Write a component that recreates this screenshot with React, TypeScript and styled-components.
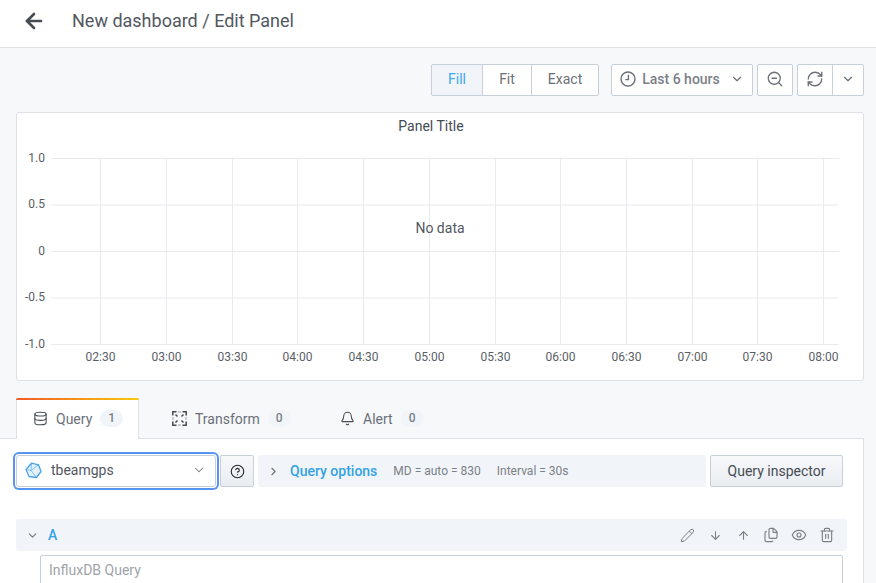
import React from "react";
import styled, { createGlobalStyle } from "styled-components";
import {
  ArrowLeft, ZoomOut, RefreshCw, ChevronDown, ChevronRight, Pencil, ArrowDown, ArrowUp,
  Files, Eye, Trash2, Database, Bell, CircleHelp,
} from "lucide-react";

const Global = createGlobalStyle`
  html, body { margin: 0; padding: 0; height: 583px; overflow: hidden; background: #f7f8fa; }
  body { font-family: Roboto, "Liberation Sans", sans-serif; color: #464c54; }
  * { box-sizing: border-box; }
`;

const Page = styled.div`
  width: 876px;
  height: 583px;
  overflow: hidden;
  display: flex;
  flex-direction: column;
`;
const Header = styled.header`
  height: 48px;
  flex: none;
  background: #fff;
  border-bottom: 1px solid #dde0e5;
  display: flex;
  align-items: center;
  padding: 0 0 6px 22px;
  gap: 26px;
  color: #464c54;
`;
const Title = styled.h1`
  margin: 0;
  font-size: 18px;
  font-weight: 400;
  line-height: 24px;
  color: #52575f;
`;
const Toolbar = styled.div`
  height: 32px;
  margin: 16px 12px 0 0;
  flex: none;
  display: flex;
  justify-content: flex-end;
`;
const Group = styled.div<{ $mr?: number }>`
  display: flex;
  margin-right: ${(p) => p.$mr ?? 0}px;
`;
const ToolBtn = styled.div<{ $w: number; $active?: boolean; $pos?: "l" | "m" | "r" | "s" }>`
  width: ${(p) => p.$w}px;
  height: 32px;
  display: flex;
  align-items: center;
  justify-content: center;
  gap: 6px;
  padding-bottom: 2px;
  font-size: 14px;
  font-weight: 450;
  color: ${(p) => (p.$active ? "#3ba9ee" : "#6b7078")};
  background: ${(p) => (p.$active ? "#f1f5f9" : "#fff")};
  border: 1px solid #c7d0d9;
  margin-left: ${(p) => (p.$pos === "m" || p.$pos === "r" ? "-1px" : "0")};
  border-radius: ${(p) =>
    p.$pos === "l" ? "2px 0 0 2px" : p.$pos === "r" ? "0 2px 2px 0" : p.$pos === "s" ? "2px" : "0"};
`;
const TimeLabel = styled.span`
  color: #7b8087;
  font-weight: 500;
  margin-right: 4px;
`;
const Panel = styled.section`
  margin: 16px 12px 0 16px;
  height: 269px;
  flex: none;
  background: #fff;
  border: 1px solid #dde0e5;
  border-radius: 3px;
  position: relative;
`;
const PanelTitle = styled.div`
  height: 26px;
  line-height: 26px;
  text-align: center;
  font-size: 14px;
  font-weight: 450;
  color: #464c54;
  padding-right: 18px;
`;
const NoData = styled.div`
  position: absolute;
  left: 0;
  right: 0;
  top: 106px;
  text-align: center;
  font-size: 14px;
  line-height: 18px;
  color: #52575f;
`;
const Chart = styled.svg`
  display: block;
  text {
    font-family: Roboto, "Liberation Sans", sans-serif;
    font-size: 12px;
    fill: #5a5f67;
  }
`;
const Tabs = styled.nav`
  margin: 17px 12px 0 16px;
  height: 41px;
  flex: none;
  display: flex;
  align-items: stretch;
`;
const Tab = styled.div<{ $active?: boolean; $w: number; $pl: number }>`
  width: ${(p) => p.$w}px;
  flex: none;
  display: flex;
  align-items: center;
  gap: 8px;
  font-size: 14px;
  padding-left: ${(p) => p.$pl}px;
  color: #6b7078;
  position: relative;
  z-index: 1;
  ${(p) =>
    p.$active
      ? `
    background: #fff;
    border: 1px solid #dde0e5;
    border-top: none;
    border-bottom: none;
    height: 41px;
    border-radius: 2px 2px 0 0;
    &::before {
      content: "";
      position: absolute;
      left: -1px; right: -1px; top: 0; height: 2px;
      border-radius: 2px 2px 0 0;
      background: linear-gradient(90deg, #f05a28, #fbca0a);
    }`
      : ""}
`;
const Count = styled.span`
  width: 23px;
  height: 17px;
  line-height: 17px;
  border-radius: 9px;
  background: #f1f5f9;
  text-align: center;
  font-size: 12px;
  font-weight: 500;
  color: #7b8087;
`;
const Body = styled.main`
  flex: 1;
  margin-right: 12px;
  margin-top: -1px;
  background: #fff;
  border-top: 1px solid #dde0e5;
  border-right: 1px solid #dde0e5;
  padding: 16px 20px 0 16px;
`;
const QueryBar = styled.div`
  display: flex;
  height: 32px;
`;
const Select = styled.div`
  width: 200px;
  height: 32px;
  flex: none;
  background: #fff;
  border: 1px solid #c7d0d9;
  border-radius: 3px;
  box-shadow: 0 0 0 1px #fff, 0 0 0 3px #5794f2;
  display: flex;
  align-items: center;
  padding: 0 9px 2px 8px;
  font-size: 14px;
  color: #52575f;
`;
const SelectText = styled.span`
  flex: 1;
  margin-left: 9px;
`;
const HelpBtn = styled.div`
  width: 34px;
  height: 32px;
  margin-left: 4px;
  flex: none;
  display: flex;
  align-items: center;
  justify-content: center;
  color: #24292e;
  border: 1px solid #c7d0d9;
  border-radius: 2px;
  background: linear-gradient(#f7f8fa, #e9edf2);
`;
const Options = styled.div`
  width: 448px;
  margin-left: 4px;
  flex: none;
  height: 32px;
  display: flex;
  align-items: center;
  background: #f1f5f9;
  border-radius: 2px;
  padding-left: 9px;
  color: #6b7078;
`;
const OptionsTitle = styled.span`
  font-size: 14px;
  font-weight: 500;
  color: #33a2e5;
  margin-left: 10px;
  margin-right: 16px;
`;
const OptionsInfo = styled.span`
  font-size: 12px;
  color: #7b8087;
  margin-right: 16px;
`;
const InspectorBtn = styled.div`
  width: 133px;
  height: 32px;
  flex: none;
  margin-left: 4px;
  display: flex;
  align-items: center;
  justify-content: center;
  font-size: 14px;
  font-weight: 450;
  color: #464c54;
  border: 1px solid #c7d0d9;
  border-radius: 2px;
  background: linear-gradient(#f7f8fa, #e9edf2);
`;
const QueryRow = styled.div`
  margin-top: 32px;
  height: 32px;
  width: 831px;
  display: flex;
  align-items: center;
  background: #f1f5f9;
  border-radius: 2px;
  padding: 0 6px 0 10px;
  color: #7b8087;
`;
const RefId = styled.span`
  flex: 1;
  font-size: 14px;
  font-weight: 500;
  color: #33a2e5;
  margin-left: 9px;
`;
const RowIcons = styled.div`
  display: flex;
  align-items: center;
`;
const RowIcon = styled.span`
  width: 28px;
  display: flex;
  justify-content: center;
`;
const QueryInput = styled.div`
  margin: 4px 0 0 24px;
  height: 40px;
  border: 1px solid #c7d0d9;
  border-radius: 2px 2px 0 0;
  padding: 5px 8px;
  font-size: 14px;
  line-height: 18px;
  font-weight: 400;
  color: #9fa3a9;
  background: #fff;
`;

const xLines = [83, 149, 215, 280, 346, 412, 478, 543, 609, 675, 740, 806];
const xLabels = ["02:30", "03:00", "03:30", "04:00", "04:30", "05:00", "05:30", "06:00", "06:30", "07:00", "07:30", "08:00"];
const yTicks = [
  { y: 19, t: "1.0" },
  { y: 65, t: "0.5" },
  { y: 112, t: "0" },
  { y: 158, t: "-0.5" },
  { y: 205, t: "-1.0" },
];

const TransformIcon = () => (
  <svg width="15" height="15" viewBox="0 0 15 15" fill="none" stroke="#464c54" strokeWidth="1.5">
    <path d="M.8 4.5V.8h3.7M10.5.8h3.7v3.7M14.2 10.5v3.7h-3.7M4.5 14.2H.8v-3.7" />
    <path d="M6 1h3M6 14h3M1 6v3M14 6v3" strokeWidth="0.5" />
    <path d="M3.5 3.5l2 2M11.5 3.5l-2 2M3.5 11.5l2-2M11.5 11.5l-2-2" />
  </svg>
);

const ClockIcon = () => (
  <svg width="16" height="16" viewBox="0 0 16 16" fill="none" stroke="#6b7078" strokeWidth="1.4">
    <circle cx="8" cy="8" r="7" />
    <path d="M8.4 3.8V8.6H5.2" />
  </svg>
);

const InfluxLogo = () => (
  <svg width="17" height="17" viewBox="0 0 17 17" fill="#e3f1fb" stroke="#4aa3e8" strokeWidth="1.3" strokeLinejoin="round">
    <path d="M6.5 1.2L13.5 2.8L16 9.5L11.5 15.5L4 14.5L1 7.5Z" />
    <path d="M6.5 1.2L6 8.5L1 7.5M6 8.5L11.5 15.5M6 8.5L13.5 2.8" strokeWidth="0.6" fill="none" />
  </svg>
);

export default function App() {
  return (
    <Page>
      <Global />
      <Header>
        <ArrowLeft size={24} strokeWidth={2.7} />
        <Title>New dashboard / Edit Panel</Title>
      </Header>
      <Toolbar>
        <Group $mr={12}>
          <ToolBtn $w={52} $pos="l" $active>Fill</ToolBtn>
          <ToolBtn $w={50} $pos="m">Fit</ToolBtn>
          <ToolBtn $w={68} $pos="r">Exact</ToolBtn>
        </Group>
        <Group $mr={4}>
          <ToolBtn $w={142} $pos="s">
            <ClockIcon />
            <TimeLabel>Last 6 hours</TimeLabel>
            <ChevronDown size={14} color="#6b7078" />
          </ToolBtn>
        </Group>
        <Group $mr={4}>
          <ToolBtn $w={36} $pos="s"><ZoomOut size={18} strokeWidth={1.7} color="#6b7078" /></ToolBtn>
        </Group>
        <Group>
          <ToolBtn $w={36} $pos="l"><RefreshCw size={18} strokeWidth={1.8} color="#6b7078" /></ToolBtn>
          <ToolBtn $w={32} $pos="r"><ChevronDown size={14} color="#6b7078" /></ToolBtn>
        </Group>
      </Toolbar>
      <Panel>
        <PanelTitle>Panel Title</PanelTitle>
        <Chart width="846" height="241" viewBox="0 0 846 241">
          {yTicks.map((t, i) => (
            <g key={t.t}>
              <line x1="34" x2="822" y1={19.5 + i * 46.5} y2={19.5 + i * 46.5} stroke="#e8eaee" />
              <text x="28" y={t.y + 4} textAnchor="end">{t.t}</text>
            </g>
          ))}
          {xLines.map((x, i) => (
            <g key={x}>
              <line x1={x + 0.5} x2={x + 0.5} y1="19" y2="205" stroke="#e8eaee" />
              <text x={x + 0.5} y="222" textAnchor="middle">{xLabels[i]}</text>
            </g>
          ))}
        </Chart>
        <NoData>No data</NoData>
      </Panel>
      <Tabs>
        <Tab $active $w={123} $pl={16}>
          <Database size={15} strokeWidth={1.7} color="#464c54" />
          <span>Query</span>
          <Count>1</Count>
        </Tab>
        <Tab $w={170} $pl={33}>
          <TransformIcon />
          <span>Transform</span>
          <Count>0</Count>
        </Tab>
        <Tab $w={130} $pl={31}>
          <Bell size={15} strokeWidth={1.7} color="#464c54" />
          <span>Alert</span>
          <Count>0</Count>
        </Tab>
      </Tabs>
      <Body>
        <QueryBar>
          <Select>
            <InfluxLogo />
            <SelectText>tbeamgps</SelectText>
            <ChevronDown size={14} strokeWidth={1.8} color="#7b8087" />
          </Select>
          <HelpBtn><CircleHelp size={15} strokeWidth={1.8} /></HelpBtn>
          <Options>
            <ChevronRight size={13} />
            <OptionsTitle>Query options</OptionsTitle>
            <OptionsInfo>MD = auto = 830</OptionsInfo>
            <OptionsInfo>Interval = 30s</OptionsInfo>
          </Options>
          <InspectorBtn>Query inspector</InspectorBtn>
        </QueryBar>
        <QueryRow>
          <ChevronDown size={13} strokeWidth={2.4} />
          <RefId>A</RefId>
          <RowIcons>
            <RowIcon><Pencil size={15} strokeWidth={1.6} /></RowIcon>
            <RowIcon><ArrowDown size={13} strokeWidth={2} /></RowIcon>
            <RowIcon><ArrowUp size={13} strokeWidth={2} /></RowIcon>
            <RowIcon><Files size={16} strokeWidth={1.7} /></RowIcon>
            <RowIcon><Eye size={16} strokeWidth={1.7} /></RowIcon>
            <RowIcon><Trash2 size={16} strokeWidth={1.7} /></RowIcon>
          </RowIcons>
        </QueryRow>
        <QueryInput>InfluxDB Query</QueryInput>
      </Body>
    </Page>
  );
}
